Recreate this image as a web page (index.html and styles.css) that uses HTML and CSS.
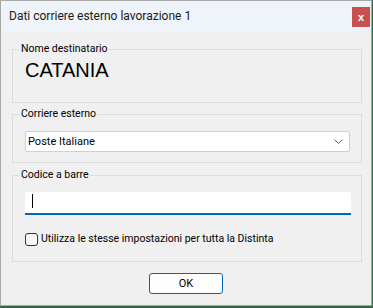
FILE: index.html
```html
<!DOCTYPE html>
<html lang="it">
<head>
  <meta charset="UTF-8">
  <title>Dati corriere esterno lavorazione 1</title>
  <link rel="stylesheet" href="styles.css">
</head>
<body>
  <div class="window">
    <div class="titlebar">
      <span class="title">Dati corriere esterno lavorazione 1</span>
      <button class="close">x</button>
    </div>
    <div class="content">
      <fieldset class="group group-name">
        <legend>Nome destinatario</legend>
        <div class="recipient">CATANIA</div>
      </fieldset>

      <fieldset class="group group-courier">
        <legend>Corriere esterno</legend>
        <div class="combo">
          <span>Poste Italiane</span>
          <svg class="chevron" width="9" height="5" viewBox="0 0 9 5">
            <path d="M0.5 0.5 L4.5 4.5 L8.5 0.5" fill="none" stroke="#606060" stroke-width="1"/>
          </svg>
        </div>
      </fieldset>

      <fieldset class="group group-barcode">
        <legend>Codice a barre</legend>
        <div class="textbox"><span class="caret"></span></div>
        <label class="check">
          <span class="box"></span>
          <span>Utilizza le stesse impostazioni per tutta la Distinta</span>
        </label>
      </fieldset>

      <div class="actions">
        <button class="ok">OK</button>
      </div>
    </div>
  </div>
</body>
</html>
```

FILE: styles.css
```css
body {
  margin: 0;
  background-color: #2e6a4c;
  font-family: Roboto, "Liberation Sans", sans-serif;
  font-size: 10.5px;
  color: #000;
}

.window {
  box-sizing: border-box;
  width: 372px;
  height: 306px;
  background-color: #f0f0f0;
  border: 1px solid #a8a8a8;
}

.titlebar {
  height: 30px;
  background-color: #eff3fa;
  display: flex;
  align-items: center;
  justify-content: space-between;
  padding-left: 8px;
}

.title {
  font-size: 12px;
  color: #1a1a1a;
}

.close {
  width: 18px;
  height: 20px;
  margin-right: 1px;
  margin-top: 2px;
  border: none;
  background-color: #c75050;
  color: #fff;
  font-family: "Liberation Sans", sans-serif;
  font-weight: bold;
  font-size: 11px;
  line-height: 18px;
  padding: 0;
}

.content {
  padding: 11px 9px 0 11px;
}

.group {
  margin: 0;
  border: 1px solid #dcdcdc;
  padding: 0 11px 0 12px;
}

.group legend {
  margin-left: -5px;
  padding: 0 1px;
  line-height: 14px;
}

.group-name {
  padding-top: 3px;
  padding-bottom: 20px;
}

.recipient {
  font-family: "Liberation Sans", Arial, sans-serif;
  font-size: 20px;
  line-height: 23px;
}

.group-courier {
  margin-top: 4px;
  padding-top: 10px;
  padding-bottom: 10px;
}

.combo {
  box-sizing: border-box;
  height: 21px;
  background-color: #fff;
  border: 1px solid #d0d0d0;
  border-radius: 2px;
  display: flex;
  align-items: center;
  justify-content: space-between;
  padding: 0 6px 0 2px;
  font-size: 11px;
}

.group-barcode {
  margin-top: 5px;
  padding-top: 10px;
  padding-bottom: 15px;
  padding-right: 10px;
}

.textbox {
  box-sizing: border-box;
  height: 23px;
  background-color: #fff;
  border-bottom: 2px solid #0067c0;
  border-radius: 2px 2px 0 0;
  padding: 2px 0 0 7px;
}

.caret {
  display: block;
  width: 1px;
  height: 14px;
  background-color: #000;
}

.check {
  display: flex;
  align-items: center;
  gap: 3px;
  margin-top: 17px;
  line-height: 14px;
}

.box {
  box-sizing: border-box;
  width: 13px;
  height: 13px;
  border: 1px solid #333;
  border-radius: 3px;
  background-color: #f7f7f7;
}

.actions {
  display: flex;
  justify-content: center;
  padding-top: 11px;
  padding-right: 2px;
}

.ok {
  box-sizing: border-box;
  width: 74px;
  height: 21px;
  background-color: #fdfdfd;
  border: 1px solid #0067c0;
  border-radius: 3px;
  font-family: Roboto, "Liberation Sans", sans-serif;
  font-size: 11px;
  color: #000;
  padding: 0;
}
```
